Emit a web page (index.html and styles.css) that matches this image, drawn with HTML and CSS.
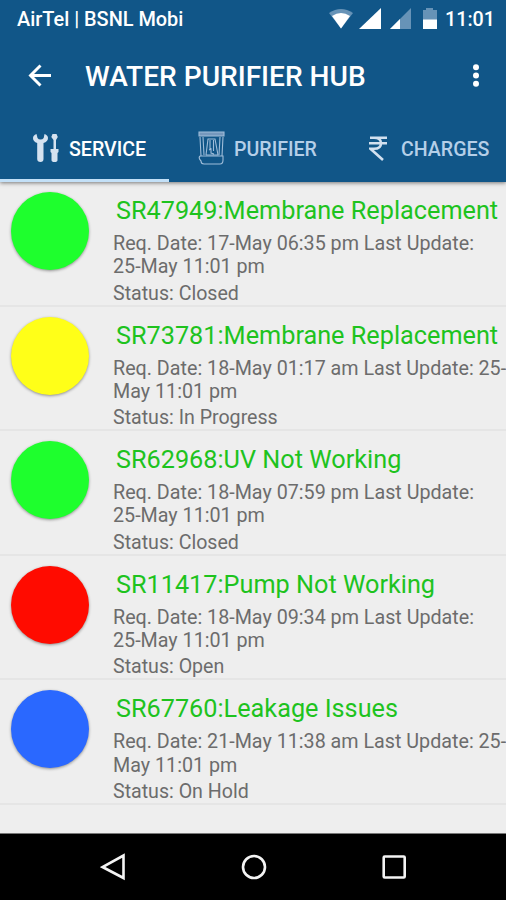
FILE: index.html
```html
<!DOCTYPE html>
<html lang="en">

<head>
  <meta charset="UTF-8">
  <meta name="viewport" content="width=device-width, initial-scale=1.0">
  <title>Water Purifier Hub</title>
  <link rel="stylesheet" href="styles.css">
</head>
<body>
  <header class="header">
    <div class="status-bar">
      <span class="carrier">AirTel | BSNL Mobi</span>
      <svg class="status-icons" width="110" height="24" viewBox="0 0 110 24">
        <path d="M0 5Q12 -3 24 5L12 20.500Z" fill="#6793b7"/>
        <path d="M3 8Q12 2 21 8L12 20.500Z" fill="#fff"/>
        <path d="M52 0V21H30Z" fill="#fff"/>
        <path d="M82 0V21H61Z" fill="#6793b7"/>
        <path d="M71 11V21H61Z" fill="#fff"/>
        <path d="M94 2h3V0h7v2h4v10H94z" fill="#6793b7"/>
        <path d="M94 11.500h14V21H94z" fill="#fff"/>
      </svg>
      <span class="clock">11:01</span>
    </div>
    <div class="toolbar">
      <svg class="back" width="24" height="24" viewBox="0 0 24 24">
        <path d="M23 11.500H2M12.500 1.500L2.500 11.500L12.500 21.500" fill="none" stroke="#fff" stroke-width="2.900"/>
      </svg>
      <h1>WATER PURIFIER HUB</h1>
      <svg class="more" width="8" height="24" viewBox="0 0 8 24">
        <circle cx="4" cy="3.200" r="3"/>
        <circle cx="4" cy="11.500" r="3"/>
        <circle cx="4" cy="19.800" r="3"/>
      </svg>
    </div>
    <nav class="tabs">
      <a class="tab tab-service active">
        <svg width="27" height="30" viewBox="0 0 27 30" fill="#d5e2f0">
          <path d="M3.500 1Q0 2.500 0 5Q0 8.500 4.200 10V26Q4.200 29 7.500 29Q10.500 29 10.500 26V10Q15 8.500 15 5Q15 2.500 11.500 1L10.700 5Q9.500 6.500 7.500 6.500Q5.500 6.500 4.500 5Z"/>
          <path d="M19.500 1h4l1.300 3-1.800 3v9h2.500v3l-1 1v7q0 2-3 2t-3-2v-7l-1-1v-3H20.500V7l-2.200-3z"/>
        </svg>
        <span>SERVICE</span>
      </a>
      <a class="tab tab-purifier">
        <svg width="28" height="34" viewBox="0 0 28 34" fill="none" stroke="#9fbdd9" stroke-width="1.100">
          <path d="M1 1H26V5H1Z" fill="#7598bd"/>
          <path d="M2 6L3 25M25 6L24 25M5 6L6 24M22 6L21 24M2 25Q0 27 3 30Q3 33 6 33H22Q25 33 25 29V25H2"/>
          <path d="M8 24L10 8H17L20 24H8M12 9V18M15.500 9V20M11 19L13 18V22L16 23"/>
        </svg>
        <span>PURIFIER</span>
      </a>
      <a class="tab tab-charges">
        <svg width="19" height="25" viewBox="0 0 19 25" fill="none" stroke="#d2e0ef" stroke-width="2.600">
          <path d="M1 1.800H18M0 7.200H18M2 1.800H5Q12 1.800 12 7.200Q12 12.800 5 12.800H1.500L14 24"/>
        </svg>
        <span>CHARGES</span>
      </a>
    </nav>
  </header>

  <main class="list">
    <div class="request">
      <div class="dot green"></div>
      <div class="info">
        <h2>SR47949:Membrane Replacement</h2>
        <p class="dates">Req. Date: 17-May 06:35 pm Last Update: <br>25-May 11:01 pm</p>
        <p class="state">Status: Closed</p>
      </div>
    </div>
    <div class="request">
      <div class="dot yellow"></div>
      <div class="info">
        <h2>SR73781:Membrane Replacement</h2>
        <p class="dates">Req. Date: 18-May 01:17 am Last Update: 25-<br>May 11:01 pm</p>
        <p class="state">Status: In Progress</p>
      </div>
    </div>
    <div class="request">
      <div class="dot green"></div>
      <div class="info">
        <h2>SR62968:UV Not Working</h2>
        <p class="dates">Req. Date: 18-May 07:59 pm Last Update: <br>25-May 11:01 pm</p>
        <p class="state">Status: Closed</p>
      </div>
    </div>
    <div class="request">
      <div class="dot red"></div>
      <div class="info">
        <h2>SR11417:Pump Not Working</h2>
        <p class="dates">Req. Date: 18-May 09:34 pm Last Update: <br>25-May 11:01 pm</p>
        <p class="state">Status: Open</p>
      </div>
    </div>
    <div class="request">
      <div class="dot blue"></div>
      <div class="info">
        <h2>SR67760:Leakage Issues</h2>
        <p class="dates">Req. Date: 21-May 11:38 am Last Update: 25-<br>May 11:01 pm</p>
        <p class="state">Status: On Hold</p>
      </div>
    </div>
  </main>

  <footer class="navbar">
    <svg width="26" height="28" viewBox="0 0 26 28">
      <path d="M23.500 2.500V25L2.500 14Z"/>
    </svg>
    <svg width="26" height="28" viewBox="0 0 26 28">
      <circle cx="13" cy="14" r="11"/>
    </svg>
    <svg width="26" height="28" viewBox="0 0 26 28">
      <rect x="2.700" y="3.500" width="21" height="21" rx="1"/>
    </svg>
  </footer>
</body>

</html>
```
FILE: styles.css
```css
* {
  box-sizing: border-box;
}

body {
  display: flex;
  flex-direction: column;
  height: 900px;
  margin: 0;
  overflow: hidden;
  background: #eeeeee;
  font-family: Roboto, sans-serif;
}

h1,
h2,
p {
  margin: 0;
  font-weight: 400;
  white-space: nowrap;
}

.header {
  height: 182px;
  flex: none;
  background: #115688;
  color: #fff;
  box-shadow: 0 1px 4px rgba(0, 0, 0, 0.5);
}

.status-bar {
  display: flex;
  align-items: center;
  height: 38px;
  padding: 0 11px 0 17px;
  font-size: 19.900px;
  font-weight: 500;
}

.status-icons {
  margin: 1px 6px 0 auto;
}

.clock {
  font-size: 19.700px;
}

.toolbar {
  display: flex;
  align-items: center;
  height: 76px;
  padding: 0 26px 0 28px;
}

.toolbar h1 {
  margin-left: 33px;
  font-size: 28.100px;
  font-weight: 500;
}

.more {
  margin-left: auto;
  fill: #fff;
}

.tabs {
  display: grid;
  grid-template-columns: 169px 169px 168px;
  height: 68px;
}

.tab {
  display: flex;
  align-items: center;
  padding-top: 6px;
  border-bottom: 3px solid transparent;
  color: #b5cfe8;
  font-size: 19.600px;
  font-weight: 500;
}

.tab svg {
  margin-top: -3px;
}

.tab.active {
  border-color: #c3e0f7;
  color: #fff;
}

.tab-service {
  gap: 9px;
  padding-left: 33px;
}

.tab-purifier {
  gap: 8px;
  padding-left: 29px;
}

.tab-charges {
  gap: 13px;
  padding-left: 31px;
}

.list {
  flex: 1;
}

.request {
  display: flex;
  height: 124.600px;
  padding: 10px 0 0 11px;
  border-bottom: 2px solid #e5e5e5;
}

.dot {
  flex: none;
  width: 78px;
  height: 78px;
  border-radius: 50%;
  box-shadow: 0 1px 3px rgba(0, 0, 0, 0.4);
}

.green {
  background: #1eff2d;
}

.yellow {
  background: #ffff18;
}

.red {
  background: #ff0b00;
}

.blue {
  background: #2a68ff;
}

.info {
  margin-left: 24px;
  color: #6c6c6c;
  font-size: 19.720px;
}

.info h2 {
  margin: 4px 0 0 3px;
  color: #1ec31e;
  font-size: 25.250px;
  line-height: 30px;
}

.dates {
  margin-top: 6px;
  line-height: 23.300px;
}

.state {
  margin-top: 3px;
  font-size: 19.600px;
  line-height: 24px;
}

.navbar {
  display: flex;
  justify-content: space-between;
  height: 67px;
  padding: 19px 99px 0 100px;
  border-top: 1px solid #777;
  background: #000;
}

.navbar svg {
  fill: none;
  stroke: #f4f4f4;
  stroke-width: 2.600;
}
```
